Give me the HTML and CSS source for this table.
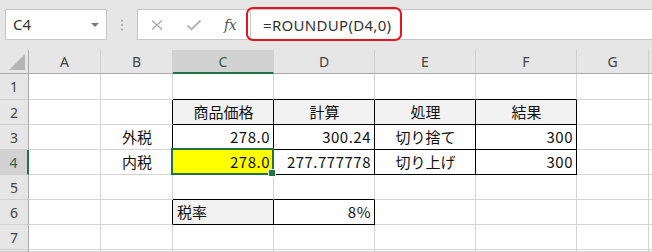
FILE: index.html
```html
<!DOCTYPE html>
<html lang="ja">
<head>
<meta charset="utf-8">
<title>Excel ROUNDUP</title>
<link rel="stylesheet" href="styles.css">
</head>
<body>
<div class="app">
  <div class="toolbar">
    <div class="namebox"><span class="name">C4</span><span class="caret"></span></div>
    <div class="grip">
      <svg width="4" height="12" viewBox="0 0 4 12"><circle cx="2" cy="1.5" r="1" fill="#a0a0a0"/><circle cx="2" cy="6" r="1" fill="#a0a0a0"/><circle cx="2" cy="10.5" r="1" fill="#a0a0a0"/></svg>
    </div>
    <div class="fbar">
      <div class="fbtns">
        <svg class="ico" width="14" height="12" viewBox="0 0 14 12"><path d="M2 1.5 L12 10.5 M12 1.5 L2 10.5" stroke="#ababab" stroke-width="1.4" fill="none"/></svg>
        <svg class="ico" width="16" height="12" viewBox="0 0 16 12"><path d="M1.5 6.5 L5.5 10.3 L14.5 1.5" stroke="#b8b8b8" stroke-width="2.2" fill="none"/></svg>
        <span class="fx">fx</span>
      </div>
      <div class="formula">=ROUNDUP(D4,0)</div>
    </div>
    <div class="hilite"></div>
  </div>
  <div class="sheet">
    <div class="corner"><svg width="29" height="24" viewBox="0 0 29 24"><polygon points="25,4 25,20 9,20" fill="#b5b5b5"/></svg></div>
    <div class="hd">A</div><div class="hd">B</div><div class="hd sel">C</div><div class="hd">D</div><div class="hd">E</div><div class="hd">F</div><div class="hd">G</div><div class="hd"></div>

    <div class="rh">1</div>
    <div class="c"></div><div class="c"></div><div class="c bb"></div><div class="c bb"></div><div class="c bb"></div><div class="c bb"></div><div class="c"></div><div class="c"></div>

    <div class="rh">2</div>
    <div class="c"></div><div class="c br"></div>
    <div class="c br bb fill ctr">商品価格</div><div class="c br bb fill ctr">計算</div><div class="c br bb fill ctr">処理</div><div class="c br bb fill ctr">結果</div>
    <div class="c"></div><div class="c"></div>

    <div class="rh">3</div>
    <div class="c"></div><div class="c br ctr">外税</div>
    <div class="c br bb num">278.0</div><div class="c br bb num">300.24</div><div class="c br bb ctr">切り捨て</div><div class="c br bb num">300</div>
    <div class="c"></div><div class="c"></div>

    <div class="rh rsel">4</div>
    <div class="c"></div><div class="c br ctr">内税</div>
    <div class="c br bb num yel active">278.0</div><div class="c br bb num">277.777778</div><div class="c br bb ctr">切り上げ</div><div class="c br bb num">300</div>
    <div class="c"></div><div class="c"></div>

    <div class="rh">5</div>
    <div class="c"></div><div class="c"></div><div class="c bb"></div><div class="c bb"></div><div class="c"></div><div class="c"></div><div class="c"></div><div class="c"></div>

    <div class="rh">6</div>
    <div class="c"></div><div class="c br"></div>
    <div class="c br bb fill lft">税率</div><div class="c br bb num">8%</div>
    <div class="c"></div><div class="c"></div><div class="c"></div><div class="c"></div>

    <div class="rh">7</div>
    <div class="c"></div><div class="c"></div><div class="c"></div><div class="c"></div><div class="c"></div><div class="c"></div><div class="c"></div><div class="c"></div>

    <div class="rh"></div>
    <div class="c"></div><div class="c"></div><div class="c"></div><div class="c"></div><div class="c"></div><div class="c"></div><div class="c"></div><div class="c"></div>
  </div>
</div>
</body>
</html>
```

FILE: styles.css
```css
html, body {
  margin: 0;
  padding: 0;
  background: #ffffff;
}
.app {
  width: 652px;
  height: 252px;
  overflow: hidden;
  font-family: "Noto Sans", sans-serif;
}
.toolbar {
  position: relative;
  height: 50px;
  box-sizing: border-box;
  padding-top: 9px;
  background: #e6e6e6;
  display: flex;
  align-items: flex-start;
}
.namebox {
  margin-left: 5px;
  width: 102px;
  height: 31px;
  box-sizing: border-box;
  border: 1px solid #c6c6c6;
  background: #fff;
  display: flex;
  align-items: center;
  justify-content: space-between;
  padding: 0 6px 0 7px;
}
.name {
  font-size: 15px;
  color: #333;
  line-height: 1;
}
.caret {
  width: 0;
  height: 0;
  border-left: 4px solid transparent;
  border-right: 4px solid transparent;
  border-top: 4px solid #777;
  margin-right: 1px;
}
.grip {
  width: 30px;
  height: 31px;
  display: flex;
  align-items: center;
  justify-content: center;
}
.fbar {
  flex: 1;
  height: 31px;
  box-sizing: border-box;
  border: 1px solid #c6c6c6;
  border-right: none;
  background: #fff;
  display: flex;
  align-items: stretch;
}
.fbtns {
  width: 112px;
  display: flex;
  align-items: center;
  padding-left: 12px;
  box-sizing: border-box;
}
.ico {
  display: block;
}
.ico + .ico {
  margin-left: 22px;
}
.fx {
  margin-left: 22px;
  font-family: "DejaVu Serif", "Liberation Serif", serif;
  font-style: italic;
  font-size: 14px;
  color: #555;
  line-height: 1;
  letter-spacing: -0.5px;
}
.formula {
  flex: 1;
  margin: 1px 0;
  border-left: 1px solid #c9c9c9;
  padding-left: 12px;
  display: flex;
  align-items: center;
  font-family: "Noto Sans", sans-serif;
  font-size: 15px;
  color: #333;
  letter-spacing: 0.3px;
}
.hilite {
  position: absolute;
  left: 246px;
  top: 7px;
  width: 156px;
  height: 34px;
  box-sizing: border-box;
  border: 2px solid #e8141b;
  border-radius: 7px;
}
.sheet {
  display: grid;
  grid-template-columns: 29px 72px 72px 101px 101px 101px 101px 72px 1fr;
  grid-template-rows: 24px 26px repeat(6, 25px) 1fr;
  height: 202px;
}
.sheet > div {
  box-sizing: border-box;
  min-width: 0;
}
.corner {
  background: #e6e6e6;
  border-right: 1px solid #a9a9a9;
  border-bottom: 1px solid #a9a9a9;
}
.corner svg {
  display: block;
}
.hd {
  background: #e6e6e6;
  border-right: 1px solid #cfcfcf;
  border-bottom: 1px solid #a9a9a9;
  display: flex;
  align-items: center;
  justify-content: center;
  font-size: 14px;
  color: #444;
}
.hd.sel {
  background: #d2d2d2;
  border-bottom: 2px solid #217346;
  color: #2f5f4a;
}
.rh {
  background: #e6e6e6;
  border-right: 1px solid #a9a9a9;
  border-bottom: 1px solid #cfcfcf;
  display: flex;
  align-items: center;
  justify-content: center;
  font-size: 14px;
  color: #444;
}
.rh.rsel {
  background: #d2d2d2;
  border-right: 2px solid #217346;
  color: #2f5f4a;
}
.c {
  background: #fff;
  border-right: 1px solid #d4d4d4;
  border-bottom: 1px solid #d4d4d4;
  display: flex;
  align-items: center;
  font-family: "Noto Sans CJK JP", "Noto Sans", sans-serif;
  font-size: 15px;
  color: #111;
  white-space: nowrap;
  padding: 0 3px 1px 4px;
}
.c.br {
  border-right-color: #000;
}
.c.bb {
  border-bottom-color: #000;
}
.fill {
  background: #f2f2f2;
}
.ctr {
  justify-content: center;
}
.lft {
  justify-content: flex-start;
}
.num {
  justify-content: flex-end;
  letter-spacing: 0.5px;
}
.yel {
  background: #ffff00;
}
.active {
  position: relative;
}
.active::after {
  content: "";
  position: absolute;
  left: -2px;
  top: -2px;
  right: -1px;
  bottom: -1px;
  border: 2px solid #217346;
}
.active::before {
  content: "";
  position: absolute;
  right: -2px;
  bottom: -2px;
  width: 6px;
  height: 6px;
  background: #217346;
  box-shadow: 0 0 0 1px #fff;
  z-index: 2;
}
```
